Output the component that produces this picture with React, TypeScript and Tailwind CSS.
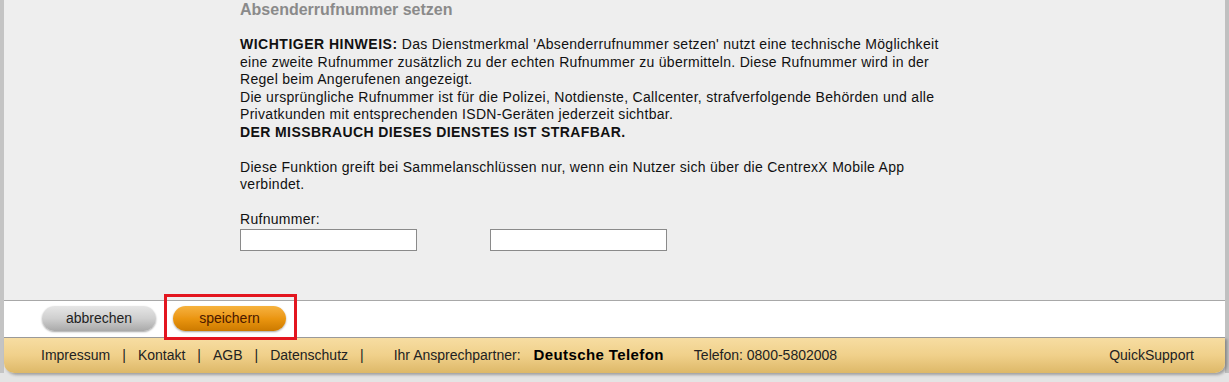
import React from 'react';

const FooterLink: React.FC<{ label: string; pipe?: boolean }> = ({ label, pipe = true }) => (
    <>
        <span>{label}</span>
        {pipe && <span className="px-[12px]">|</span>}
    </>
);

const App: React.FC = () => {
    return (
        <div className="w-full h-[382px] bg-[#e4e4e4] font-['Liberation_Sans',Arial,sans-serif] text-[14px] text-[#111] overflow-hidden">
            <div className="flex flex-col border-x-4 border-l-[#c4c4c4] border-r-[#c0c0c0]">
                {/* Content panel */}
                <div className="h-[300px] bg-[#eeeeee] pl-[236px] pt-px">
                    <h1 className="text-[16px] leading-[18px] font-bold text-[#8a8a8a]">Absenderrufnummer setzen</h1>
                    <div className="w-[760px] mt-[17px] leading-[17.5px] tracking-[0.3px]">
                        <p>
                            <b className="tracking-[0.5px]">WICHTIGER HINWEIS:</b> Das Dienstmerkmal 'Absenderrufnummer setzen' nutzt eine technische Möglichkeit<br />
                            eine zweite Rufnummer zusätzlich zu der echten Rufnummer zu übermitteln. Diese Rufnummer wird in der<br />
                            Regel beim Angerufenen angezeigt.
                        </p>
                        <p>
                            Die ursprüngliche Rufnummer ist für die Polizei, Notdienste, Callcenter, strafverfolgende Behörden und alle<br />
                            Privatkunden mit entsprechenden ISDN-Geräten jederzeit sichtbar.
                        </p>
                        <p className="font-bold tracking-[0.4px]">DER MISSBRAUCH DIESES DIENSTES IST STRAFBAR.</p>
                        <p className="mt-[17.5px]">
                            Diese Funktion greift bei Sammelanschlüssen nur, wenn ein Nutzer sich über die CentrexX Mobile App<br />
                            verbindet.
                        </p>
                        <p className="mt-[17.5px]">Rufnummer:</p>
                        <div className="flex gap-[73px]">
                            <input type="text" className="w-[177px] h-[22px] bg-white border border-[#8a8a8a] outline-none" />
                            <input type="text" className="w-[177px] h-[22px] bg-white border border-[#8a8a8a] outline-none" />
                        </div>
                    </div>
                </div>

                {/* Button bar */}
                <div className="relative h-[37px] bg-white border-t border-[#a8a8a8] flex items-center gap-[17px] pl-[38px] pb-[2px]">
                    <button className="w-[114px] h-[25px] rounded-full bg-gradient-to-b from-[#e6e6e6] via-[#cfcfcf] to-[#a9a9a9] shadow-[0_1px_2px_rgba(0,0,0,0.35)] text-[#222] text-[14px] leading-none">abbrechen</button>
                    <button className="w-[113px] h-[25px] rounded-full bg-gradient-to-b from-[#f6b23c] via-[#eb9610] to-[#cc7a00] shadow-[0_1px_2px_rgba(0,0,0,0.35)] text-[#4a1800] text-[14px] leading-none">speichern</button>
                    <div className="absolute left-[160px] top-[-7px] w-[133px] h-[46px] border-[3px] border-[#e3161f] z-10"></div>
                </div>

                {/* Footer */}
                <div className="h-[36px] rounded-b-[10px] border-t border-[#9a9a9a] bg-gradient-to-b from-[#f7dda2] via-[#f0d08a] to-[#ddb868] shadow-[2px_2px_3px_rgba(0,0,0,0.3)] flex items-center pl-[37px] pr-[31px] text-[#222]">
                    <FooterLink label="Impressum" />
                    <FooterLink label="Kontakt" />
                    <FooterLink label="AGB" />
                    <FooterLink label="Datenschutz" />
                    <span className="ml-[18px]">Ihr Ansprechpartner:</span>
                    <span className="ml-[13px] text-[15px] font-bold tracking-[0.4px] text-[#000]">Deutsche Telefon</span>
                    <span className="ml-[30px]">Telefon: 0800-5802008</span>
                    <span className="ml-auto">QuickSupport</span>
                </div>
            </div>
        </div>
    );
};

export default App;
